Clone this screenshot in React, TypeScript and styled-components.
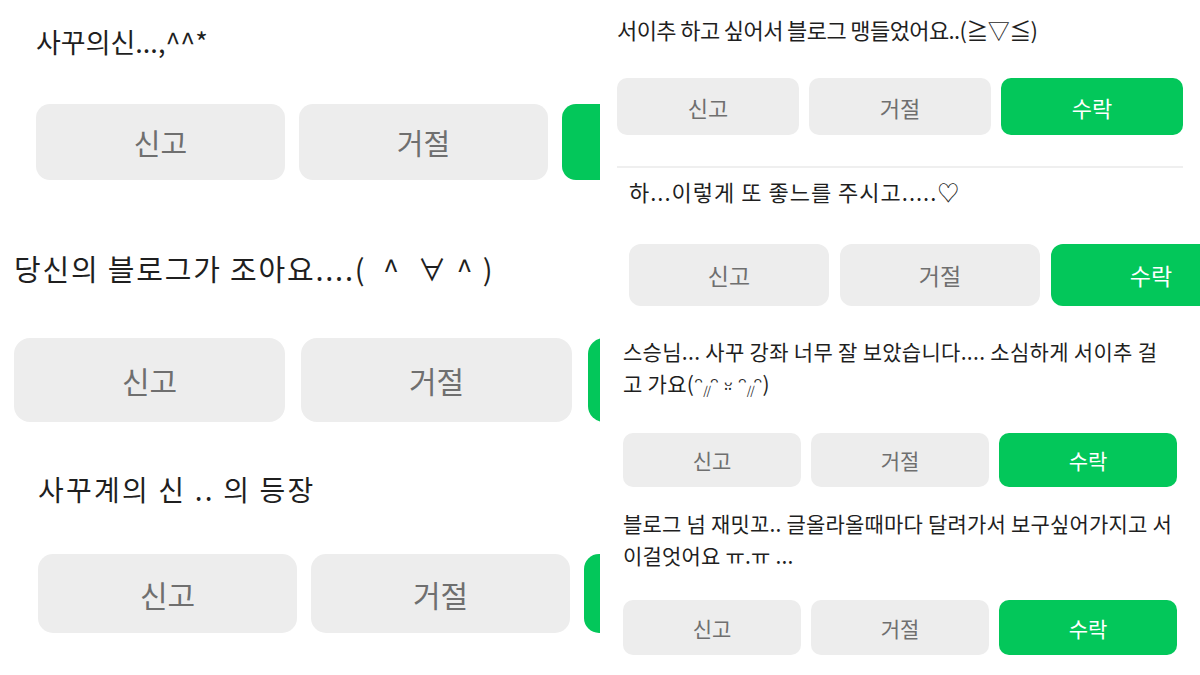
import { FC, ReactNode } from "react";
import styled, { createGlobalStyle } from "styled-components";

const GlobalStyle = createGlobalStyle`
  html, body {
    margin: 0;
    padding: 0;
    background: #ffffff;
  }
  body {
    font-family: "Noto Sans CJK KR", "Noto Sans", "DejaVu Sans", sans-serif;
    -webkit-font-smoothing: antialiased;
  }
`;

const colors = {
  text: "#1f1f1f",
  muted: "#6f6f6f",
  chip: "#ededed",
  green: "#03c75a",
  line: "#efefef",
};

// small blush marks inside the kaomoji
const Blush = styled.span`
  font-size: 0.55em;
  line-height: 0;
  letter-spacing: -0.1em;
  vertical-align: -0.25em;
`;

type Shot = {
  id: string;
  height: number;
  padTop: number;
  padLeft: number;
  fontSize: number;
  lineHeight: number;
  spacing: number;
  lines: ReactNode[];
  buttonTop: number;
  buttonWidth: number;
  buttonHeight: number;
  gap: number;
  radius: number;
  buttonFont: number;
  divider?: boolean;
};

const leftShots: Shot[] = [
  {
    id: "l1",
    height: 225,
    padTop: 23,
    padLeft: 36,
    fontSize: 27,
    lineHeight: 38,
    spacing: 0,
    lines: ["사꾸의신...,^^*"],
    buttonTop: 104,
    buttonWidth: 249,
    buttonHeight: 76,
    gap: 14,
    radius: 14,
    buttonFont: 29,
  },
  {
    id: "l2",
    height: 225,
    padTop: 23,
    padLeft: 14,
    fontSize: 29,
    lineHeight: 40,
    spacing: 1.8,
    lines: ["당신의 블로그가 조아요....(  ^  ∀ ^ )"],
    buttonTop: 113,
    buttonWidth: 271,
    buttonHeight: 84,
    gap: 16,
    radius: 16,
    buttonFont: 30,
  },
  {
    id: "l3",
    height: 225,
    padTop: 19,
    padLeft: 38,
    fontSize: 28,
    lineHeight: 40,
    spacing: 2.2,
    lines: ["사꾸계의 신 .. 의 등장"],
    buttonTop: 104,
    buttonWidth: 259,
    buttonHeight: 79,
    gap: 14,
    radius: 15,
    buttonFont: 30,
  },
];

const rightShots: Shot[] = [
  {
    id: "r1",
    height: 168,
    padTop: 14,
    padLeft: 17,
    fontSize: 22,
    lineHeight: 30,
    spacing: -0.6,
    lines: ["서이추 하고 싶어서 블로그 맹들었어요..(≧▽≦)"],
    buttonTop: 78,
    buttonWidth: 182,
    buttonHeight: 57,
    gap: 10,
    radius: 10,
    buttonFont: 22,
    divider: true,
  },
  {
    id: "r2",
    height: 162,
    padTop: 8,
    padLeft: 29,
    fontSize: 22,
    lineHeight: 30,
    spacing: 1,
    lines: ["하...이렇게 또 좋느를 주시고.....♡"],
    buttonTop: 76,
    buttonWidth: 200,
    buttonHeight: 62,
    gap: 11,
    radius: 12,
    buttonFont: 23,
  },
  {
    id: "r3",
    height: 170,
    padTop: 5,
    padLeft: 23,
    fontSize: 21,
    lineHeight: 32,
    spacing: 0.3,
    lines: [
      "스승님... 사꾸 강좌 너무 잘 보았습니다.... 소심하게 서이추 걸",
      <>
        고 가요(ᵔ<Blush>//</Blush>ᵔ ᵕ̤ ᵔ<Blush>//</Blush>ᵔ)
      </>,
    ],
    buttonTop: 103,
    buttonWidth: 178,
    buttonHeight: 54,
    gap: 10,
    radius: 10,
    buttonFont: 21,
  },
  {
    id: "r4",
    height: 175,
    padTop: 7,
    padLeft: 23,
    fontSize: 21,
    lineHeight: 32,
    spacing: 0.2,
    lines: [
      "블로그 넘 재밋꼬.. 글올라올때마다 달려가서 보구싶어가지고 서",
      "이걸엇어요 ㅠ.ㅠ ...",
    ],
    buttonTop: 100,
    buttonWidth: 178,
    buttonHeight: 55,
    gap: 10,
    radius: 10,
    buttonFont: 21,
  },
];

const Page = styled.main`
  display: flex;
  width: 1200px;
  height: 675px;
  overflow: hidden;
  background: #ffffff;
`;

const Column = styled.div`
  display: flex;
  flex-direction: column;
  width: 600px;
  flex: none;
  overflow: hidden;
`;

const Panel = styled.section<{ $h: number; $pt: number; $pl: number }>`
  display: flex;
  flex-direction: column;
  box-sizing: border-box;
  height: ${(p) => p.$h}px;
  padding: ${(p) => p.$pt}px 0 0 ${(p) => p.$pl}px;
`;

const Message = styled.p<{ $fs: number; $lh: number; $ls: number }>`
  margin: 0;
  color: ${colors.text};
  font-size: ${(p) => p.$fs}px;
  line-height: ${(p) => p.$lh}px;
  letter-spacing: ${(p) => p.$ls}px;
  white-space: pre;
`;

const ButtonRow = styled.div<{ $gap: number; $mt: number }>`
  display: flex;
  gap: ${(p) => p.$gap}px;
  margin-top: ${(p) => p.$mt}px;
`;

const ActionButton = styled.button<{
  $w: number;
  $h: number;
  $r: number;
  $fs: number;
  $primary?: boolean;
}>`
  flex: none;
  width: ${(p) => p.$w}px;
  height: ${(p) => p.$h}px;
  padding: 0;
  border: 0;
  border-radius: ${(p) => p.$r}px;
  background: ${(p) => (p.$primary ? colors.green : colors.chip)};
  color: ${(p) => (p.$primary ? "#ffffff" : colors.muted)};
  font-family: inherit;
  font-size: ${(p) => p.$fs}px;
  font-weight: 400;
`;

const Divider = styled.div`
  margin-top: auto;
  width: 566px;
  height: 2px;
  background: ${colors.line};
`;

const ShotPanel: FC<{ shot: Shot }> = ({ shot }) => {
  const mt = shot.buttonTop - shot.padTop - shot.lines.length * shot.lineHeight;
  const btn = {
    $w: shot.buttonWidth,
    $h: shot.buttonHeight,
    $r: shot.radius,
    $fs: shot.buttonFont,
  };
  return (
    <Panel $h={shot.height} $pt={shot.padTop} $pl={shot.padLeft}>
      <Message $fs={shot.fontSize} $lh={shot.lineHeight} $ls={shot.spacing}>
        {shot.lines.map((line, i) => (
          <span key={i}>
            {i > 0 && <br />}
            {line}
          </span>
        ))}
      </Message>
      <ButtonRow $gap={shot.gap} $mt={mt}>
        <ActionButton {...btn}>신고</ActionButton>
        <ActionButton {...btn}>거절</ActionButton>
        <ActionButton {...btn} $primary>
          수락
        </ActionButton>
      </ButtonRow>
      {shot.divider && <Divider />}
    </Panel>
  );
};

const App: FC = () => {
  return (
    <>
      <GlobalStyle />
      <Page>
        <Column>
          {leftShots.map((s) => (
            <ShotPanel key={s.id} shot={s} />
          ))}
        </Column>
        <Column>
          {rightShots.map((s) => (
            <ShotPanel key={s.id} shot={s} />
          ))}
        </Column>
      </Page>
    </>
  );
};

export default App;
